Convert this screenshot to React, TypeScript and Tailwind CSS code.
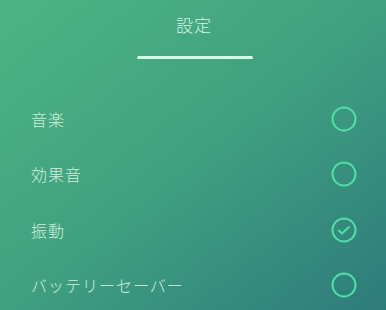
import { useState } from "react";

const ITEMS = [
  { id: "music", label: "音楽", on: false },
  { id: "sfx", label: "効果音", on: false },
  { id: "vibe", label: "振動", on: true },
  { id: "saver", label: "バッテリーセーバー", on: false },
];

function Toggle({ on }: { on: boolean }) {
  return (
    <svg width="26" height="26" viewBox="0 0 26 26" fill="none" aria-hidden>
      <circle cx="13" cy="13" r="11.5" stroke="#4fe0a6" strokeWidth="2" />
      {on && (
        <path
          d="M7.8 13.6l3.2 3 7-6.6"
          stroke="#4fe0a6"
          strokeWidth="2"
          strokeLinecap="round"
          strokeLinejoin="round"
        />
      )}
    </svg>
  );
}

export default function App() {
  const [items, setItems] = useState(ITEMS);

  function flip(id: string) {
    setItems((prev) => prev.map((i) => (i.id === id ? { ...i, on: !i.on } : i)));
  }

  return (
    <div
      className="w-[386px] h-[310px] overflow-hidden bg-linear-to-br from-[#4db584] via-[#40a080] to-[#2e7b7b] text-[#cdeed9]"
      style={{ fontFamily: '"Noto Sans CJK JP", "Noto Sans", sans-serif' }}
    >
      <header className="flex flex-col items-center pt-[12px]">
        <h1 className="text-[17px] leading-[26px] font-light text-[#d4f5e3] tracking-[1px] ml-[2px]">設定</h1>
        <div className="mt-[18px] ml-[4px] h-[3px] w-[116px] rounded-full bg-[#d6f7e6]" />
      </header>

      <ul className="mt-[32px]">
        {items.map((item) => (
          <li
            key={item.id}
            onClick={() => flip(item.id)}
            className="h-[55.5px] flex items-center justify-between pl-[31px] pr-[29px] cursor-pointer"
          >
            <span className="text-[16px] font-light tracking-[1px] text-[#d0efdb]">{item.label}</span>
            <Toggle on={item.on} />
          </li>
        ))}
      </ul>
    </div>
  );
}
